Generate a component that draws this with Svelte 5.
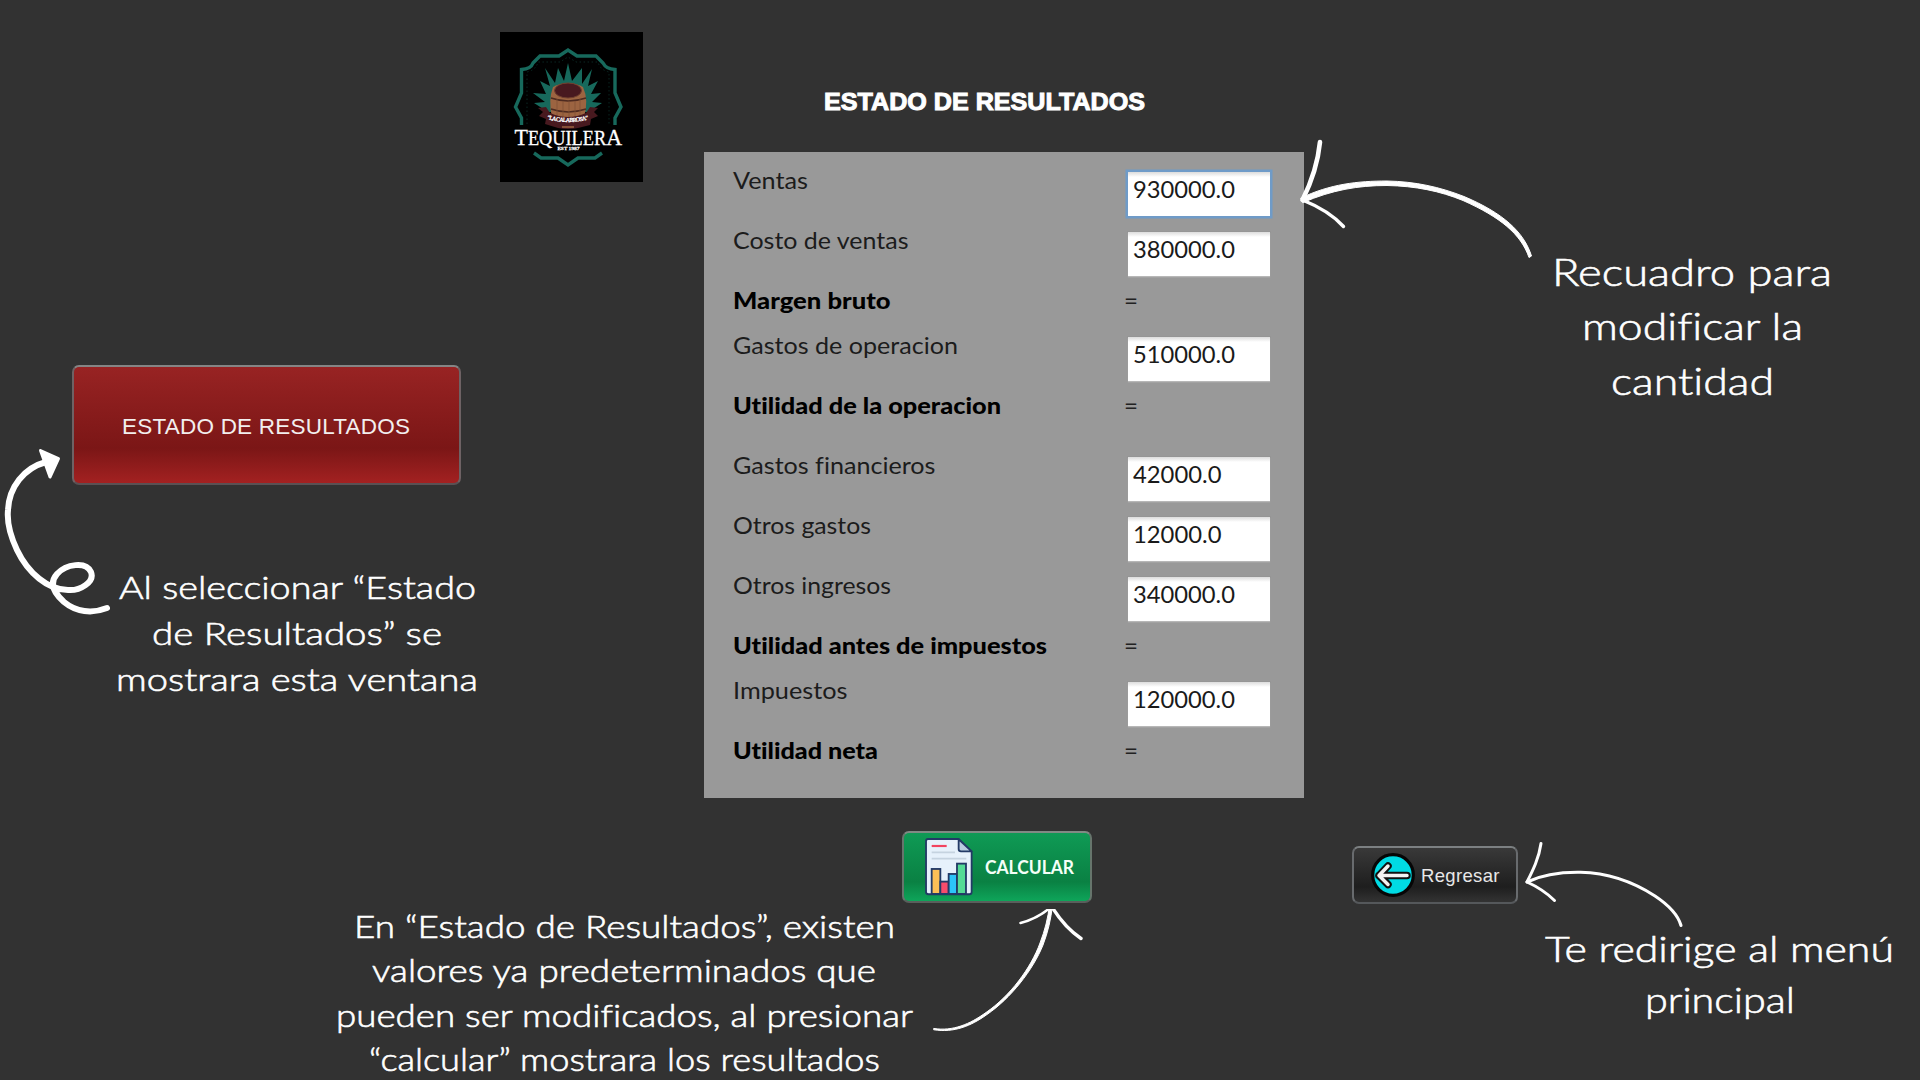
<script>
  const rows = [
    { label: 'Ventas', w: 75, value: '930000.0', focus: true },
    { label: 'Costo de ventas', w: 175.5, value: '380000.0' },
    { label: 'Margen bruto', w: 157.5, total: true },
    { label: 'Gastos de operacion', w: 225, value: '510000.0' },
    { label: 'Utilidad de la operacion', w: 268, total: true, tall: true },
    { label: 'Gastos financieros', w: 202.5, value: '42000.0' },
    { label: 'Otros gastos', w: 138, value: '12000.0' },
    { label: 'Otros ingresos', w: 158, value: '340000.0' },
    { label: 'Utilidad antes de impuestos', w: 314, total: true },
    { label: 'Impuestos', w: 114.5, value: '120000.0' },
    { label: 'Utilidad neta', w: 145, total: true }
  ];

  const noteOpen = [
    ['Al seleccionar “Estado', 357],
    ['de Resultados” se', 290],
    ['mostrara esta ventana', 362]
  ];
  const noteEdit = [
    ['Recuadro para', 280],
    ['modificar la', 221],
    ['cantidad', 163]
  ];
  const noteCalc = [
    ['En “Estado de Resultados”, existen', 541],
    ['valores ya predeterminados que', 504],
    ['pueden ser modificados, al presionar', 577],
    ['“calcular” mostrara los resultados', 511]
  ];
  const noteBack = [
    ['Te redirige al menú', 349],
    ['principal', 150]
  ];
</script>

{#snippet fit(text, width, height, base, adjust = 'spacingAndGlyphs')}
  <svg class="fit" {width} {height}>
    <text x="0" y={base} textLength={width} lengthAdjust={adjust}>{text}</text>
  </svg>
{/snippet}

<main>
  <section class="top">
    <div class="left">
      <button class="btn red">{@render fit('ESTADO DE RESULTADOS', 288, 30, 24, 'spacing')}</button>
      <div class="note open">
        {#each noteOpen as [t, w]}{@render fit(t, w, 46, 34)}{/each}
      </div>
    </div>

    <svg class="logo" viewBox="0 0 143 150" width="143" height="150">
      <rect width="143" height="150" fill="#000" />
      <g fill="none" stroke="#17695c" stroke-width="3.4">
        <path d="M21.5 93V86L15.5 75L21.5 61V37.5Q31 37 33 31L40 24H59L68 18L77 24H96L103 31Q106 37 115 37.5V61L121 75L115 86V93" />
        <path d="M34 121L41 126H58L68 133L78 126H95L102 121" />
      </g>
      <path d="M27 92V40Q36 38 38 30H60L68 25L76 30H98Q100 38 109 40V92" fill="none" stroke="#0d302b" stroke-width=".8" stroke-dasharray="1.5 2.5" />
      <path fill="#17695c" d="M68 31L72 49L82 36L82 52L92 37L88 54L98 49L91 62L101 61L92 70L102 71L88 80H48L34 71L45 70L33 61L46 62L40 49L50 54L45 36L55 51L58 36L64 49Z" />
      <path fill="#9c6441" d="M53 55Q68 47 83 55Q89 68 84 86Q68 92 52 86Q48 68 53 55Z" />
      <ellipse cx="68" cy="58.5" rx="13.5" ry="7.500" fill="#48191f" stroke="#70402f" />
      <path d="M51 66Q68 72 86 66M51 77Q68 83 86 77" fill="none" stroke="#4d2a20" stroke-width="1.6" />
      <path d="M57 67V85M63 69V87M69 69V87M75 69V87M80 67V85" stroke="#7f4f34" stroke-width=".7" />
      <path fill="#48191f" d="M38 76L46 75L50 81Q68 89 86 81L90 75L98 76L94 80L98 84L91 87L90 93L78 96Q68 98 58 96L45 92L46 87L39 84L43 80Z" />
      <path d="M62 95H74" stroke="#9c6441" stroke-width="1.5" />
      <path id="ribbon" d="M47 87Q68 93 90 87" fill="none" />
      <text class="serif tiny"><textPath href="#ribbon" textLength="42">“LA CALABROSA”</textPath></text>
      <rect x="14" y="97" width="109" height="22" fill="#000" />
      <text class="serif" x="14.5" y="113.300" textLength="107.5" lengthAdjust="spacingAndGlyphs"><tspan font-size="24">T</tspan><tspan font-size="20">EQUILER</tspan><tspan font-size="24">A</tspan></text>
      <text class="serif est" x="57.5" y="118" textLength="22" lengthAdjust="spacingAndGlyphs">EST 1987</text>
    </svg>

    <div class="center">
      <h1>{@render fit('ESTADO DE RESULTADOS', 321, 30, 24)}</h1>
      <div class="panel">
        {#each rows as r}
          <div class="row" class:short={r.total && !r.tall} class:total={r.total}>
            {@render fit(r.label, r.w, 30, 20.8)}
            {#if r.total}
              <span class="eq">{@render fit('=', 14, 30, 20.8)}</span>
            {:else}
              <div class="field" class:focus={r.focus}>{@render fit(r.value, r.value.length === 8 ? 102 : 88.5, 30, 25.8)}</div>
            {/if}
          </div>
        {/each}
      </div>
    </div>

    <div class="note edit">
      {#each noteEdit as [t, w]}{@render fit(t, w, 54.5, 40)}{/each}
    </div>
  </section>

  <section class="actions">
    <button class="btn green">
      <svg class="doc" viewBox="108 55 144 173" width="48" height="57.6">
        <path d="M117 58H209L248 96V217Q248 224 241 224H119Q111 224 111 217V65Q111 58 117 58Z" fill="#e6f1fb" stroke="#233a66" stroke-width="5.5" />
        <path d="M209 59V88Q209 95 216 95H248Z" fill="#b9cce0" stroke="#233a66" stroke-width="5.5" stroke-linejoin="round" />
        <path d="M128 79H173" stroke="#f2435f" stroke-width="6.5" />
        <path d="M128 98H198M128 117H232" stroke="#c5d3e0" stroke-width="5" />
        <g stroke="#233a66" stroke-width="5.5">
          <rect x="128" y="148" width="26" height="75" fill="#fbbf56" />
          <rect x="154" y="186" width="25" height="37" fill="#f84c6c" />
          <rect x="179" y="163" width="25" height="60" fill="#2cc4f8" />
          <rect x="204" y="132" width="27" height="91" fill="#54db95" />
        </g>
      </svg>
      {@render fit('CALCULAR', 89, 26, 20)}
    </button>
    <button class="btn dark">
      <svg class="back" viewBox="0 0 46 46" width="46" height="46">
        <circle cx="23" cy="23" r="20.3" fill="#00dbe4" stroke="#060606" stroke-width="3.2" />
        <g fill="none" stroke-linecap="round" stroke-linejoin="round">
          <path d="M37 23.500H9M18 14L9 23.500L18 32.500" stroke="#111" stroke-width="7.5" />
          <path d="M37 23.500H9M18 14L9 23.500L18 32.500" stroke="#f2f2f2" stroke-width="3.500" />
        </g>
      </svg>
      {@render fit('Regresar', 78.500, 26, 19.5, 'spacing')}
    </button>
  </section>

  <section class="bottom">
    <div class="note calc">
      {#each noteCalc as [t, w]}{@render fit(t, w, 44.4, 33.4)}{/each}
    </div>
    <div class="note backnote">
      {#each noteBack as [t, w]}{@render fit(t, w, 51, 38.3)}{/each}
    </div>
  </section>

  <svg class="arrows" viewBox="0 0 1920 1080" width="1920" height="1080">
    <g fill="none" stroke="#fff" stroke-linecap="round" stroke-linejoin="round">
      <path stroke-width="6" d="M107 608C92 614 76 612 64 602C54 593 49 583 57 574C66 564 86 561 91 572C95 582 80 591 68 590C48 590 28 573 17 550C9 533 7 520 8 510C9 487 24 468 46 462" />
      <path stroke-width="3" fill="#fff" d="M40.500 450.500L58.500 458.500L50 477Z" />
      <path stroke-width="1" fill="#fff" d="M1301 198C1330 184 1358 181 1387 181C1415 181.500 1440 187 1464 196.500C1503 213 1524 232 1531.500 256L1529 257.500C1521 234 1500 217 1463 200.500C1440 191 1415 186 1387 185.500C1358 185.500 1332 190 1303 202.500Z" />
      <path stroke-width="4.600" d="M1302.500 200C1312 181 1318 162 1320 142" />
      <path stroke-width="3.400" d="M1302.500 200C1320 207 1334 216 1343.500 226.500" />
      <path stroke-width="3.100" d="M1527 882C1545 873.500 1562 872 1580.500 872.300C1612 873 1638 885 1655 896C1670 906 1678 915 1681 925.500" />
      <path stroke-width="3" d="M1527 882C1533 870 1539 858 1541 843.500M1527 882C1538 887 1547 893 1554.500 900.500" />
    </g>
    <svg y="909" width="1920" height="171" viewBox="0 909 1920 171">
      <g fill="none" stroke="#fff" stroke-linecap="round" stroke-linejoin="round">
        <path stroke-width="1" fill="#fff" d="M934 1028.500C953 1031.500 970 1024 986 1012.500C1010 996 1031 968 1040 943C1045 930 1048 918 1049.500 905H1052.500C1051 919 1048 932 1043 945C1033 970 1011 998 987 1014.500C971 1026 954 1033 934 1029.800Z" />
        <path stroke-width="2.600" d="M1020.500 923C1032 920 1043 914 1051 907" />
        <path stroke-width="3.400" d="M1052 907C1060 920 1070 931 1081 938.500" />
      </g>
    </svg>
  </svg>
</main>

<style>
  :global(body) { margin: 0; background: #323232; }
  main {
    position: relative;
    width: 1920px;
    height: 1080px;
    overflow: hidden;
    background: #323232;
    font-family: Lato, "Open Sans", sans-serif;
    font-variant-ligatures: none;
  }
  svg { display: block; flex: none; }
  .fit { overflow: visible; fill: currentColor; }
  .top { display: flex; height: 831px; align-items: flex-start; }
  .left { width: 500px; padding-top: 365px; box-sizing: border-box; }
  .logo { margin-top: 32px; }
  .center { width: 600px; margin-left: 60.5px; }
  h1 {
    margin: 0;
    height: 152.3px;
    padding: 86px 0 0 120px;
    box-sizing: border-box;
    color: #fff;
    font: 700 24.500px "Liberation Sans", Arial, sans-serif;
  }
  h1 :global(text) { stroke: #fff; stroke-width: 1px; }
  .panel {
    height: 645.400px;
    box-sizing: border-box;
    padding: 15.500px 30px 0 29.800px;
    background: #999;
    color: #1c1c1c;
    font-size: 23.300px;
  }
  .row { display: flex; justify-content: space-between; align-items: flex-start; height: 60px; }
  .row.short { height: 45px; }
  .total { font-weight: 900; color: #000; }
  .eq { width: 150px; font-weight: 400; color: #222; }
  .field {
    width: 142px;
    height: 44px;
    margin: 4px 4px 0 0;
    padding-left: 5px;
    box-sizing: border-box;
    background: linear-gradient(#dcdcdc, #fff 5px);
    box-shadow: 0 0 0 1px #8e8e8e55, 0 1px 1px #ccc;
    color: #1a1a1a;
  }
  .focus { box-shadow: 0 0 0 2.500px #6f9bc8; }

  .btn {
    display: flex;
    align-items: center;
    box-sizing: border-box;
    padding: 0;
    border: 2px solid #666;
    border-radius: 7px;
  }
  .red {
    width: 389px;
    height: 120px;
    margin-left: 71.500px;
    justify-content: center;
    border-color: #858585 #6e6264 #5a5053;
    background: linear-gradient(#982323, #7b1616 70%, #a32121);
    color: #f2eeee;
    font: 22.500px "Liberation Sans", Arial, sans-serif;
  }
  .green {
    width: 190px;
    height: 72px;
    padding-left: 21px;
    gap: 12px;
    border-color: #808a84 #66756c #595f5c;
    background: linear-gradient(#0f9a55, #0a8143 72%, #0ea55a);
    color: #f4fff8;
    font: 700 18.500px Lato, sans-serif;
  }
  .dark {
    width: 166px;
    height: 58px;
    margin: 14.500px 0 0 259.500px;
    padding-left: 16px;
    gap: 5px;
    border-color: #7c8082 #686b6e #55585b;
    background: linear-gradient(#393939, #1e1e1e 72%, #333);
    color: #e8e8e8;
    font: 18.500px "Liberation Sans", Arial, sans-serif;
  }
  .actions { display: flex; align-items: flex-start; height: 74px; padding-left: 902px; }
  .bottom { display: flex; height: 175px; }
  .note { display: flex; flex-direction: column; align-items: center; color: #fff; font-weight: 300; }
  .note :global(text) { stroke: #fff; stroke-width: .6px; }
  .open { width: 594px; margin-top: 79.900px; font-size: 32px; }
  .edit { width: 300px; margin: 245.900px 0 0 238.500px; font-size: 36.500px; }
  .calc { width: 600px; margin-left: 324.400px; font-size: 31px; }
  .backnote { width: 400px; margin: 18.700px 0 0 595.500px; font-size: 34.700px; }
  .arrows { position: absolute; inset: 0; pointer-events: none; }
  .serif { font-family: "Liberation Serif", serif; fill: #fff; stroke: #fff; stroke-width: .3px; }
  .tiny { font-size: 6px; }
  .est { font-size: 4.500px; }
</style>
